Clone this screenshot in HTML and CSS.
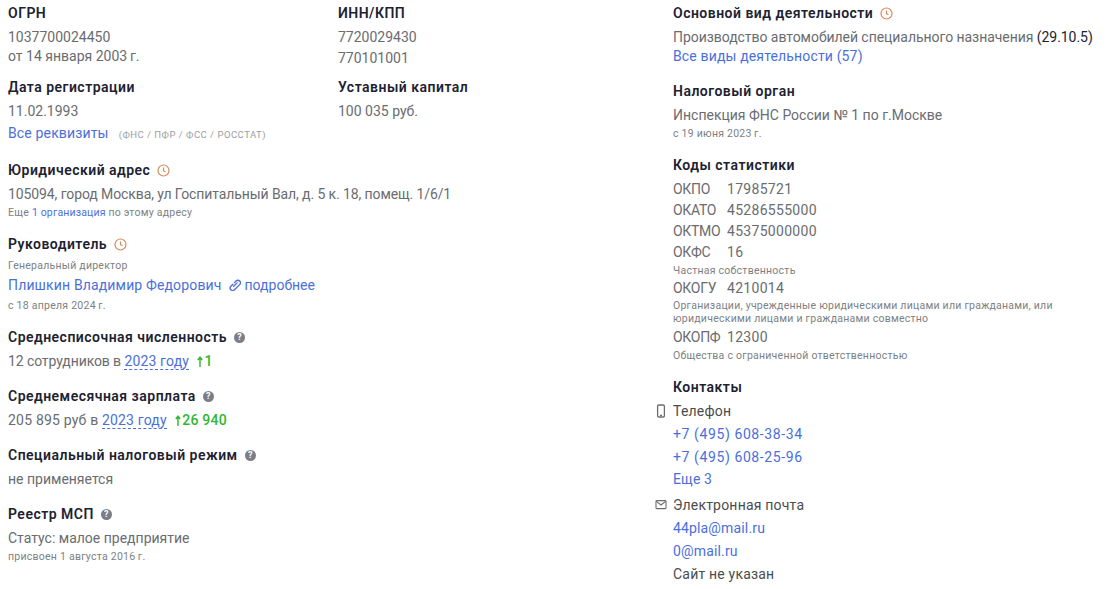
FILE: index.html
```html
<!DOCTYPE html>
<html lang="ru">
<head>
    <meta charset="UTF-8">
    <title>Реквизиты организации</title>
    <link rel="stylesheet" href="styles.css">
</head>
<body>
    <svg class="sprite" width="0" height="0">
        <symbol id="clock" viewBox="0 0 13 13">
            <circle cx="6.5" cy="6.5" r="5.5" fill="none" stroke="currentColor" stroke-width="1.2"/>
            <path d="M6.5 3.4v3.3l2 1.1" fill="none" stroke="currentColor" stroke-width="1.2"/>
        </symbol>
        <symbol id="up" viewBox="0 0 6 11">
            <path d="M3 11V1.5M.8 4L3 1.2 5.2 4" fill="none" stroke="currentColor" stroke-width="1.4"/>
        </symbol>
    </svg>

    <div class="page">
        <div class="col-left">
            <div class="req-grid">
                <div>
                    <div class="title">ОГРН</div>
                    <div class="value">1037700024450</div>
                    <div class="value-tight">от 14 января 2003&#8201;г.</div>
                </div>
                <div>
                    <div class="title">ИНН/КПП</div>
                    <div class="value">7720029430</div>
                    <div class="value next">770101001</div>
                </div>
                <div>
                    <div class="title">Дата регистрации</div>
                    <div class="value">11.02.1993</div>
                </div>
                <div>
                    <div class="title">Уставный капитал</div>
                    <div class="value">100 035 руб.</div>
                </div>
            </div>
            <div class="value next-2"><a href="#">Все реквизиты</a><span class="sources">(ФНС / ПФР / ФСС / РОССТАТ)</span></div>

            <div class="block gap-address">
                <div class="title">Юридический адрес <svg class="ico-clock"><use href="#clock"/></svg></div>
                <div class="value address">105094, город Москва, ул Госпитальный Вал, д. 5 к. 18, помещ. 1/6/1</div>
                <div class="small">Еще <a href="#">1 организация</a> по этому адресу</div>
            </div>

            <div class="block">
                <div class="title">Руководитель <svg class="ico-clock"><use href="#clock"/></svg></div>
                <div class="small role">Генеральный директор</div>
                <div class="value next-2">
                    <a href="#">Плишкин Владимир Федорович</a>
                    <a href="#" class="more">
                        <svg class="ico-link" viewBox="1.5 1.5 9 9"><path d="M5 7l2.6-2.6M4.4 5.4L2.9 6.9a1.9 1.9 0 0 0 2.7 2.7l3.9-3.9a1.9 1.9 0 0 0-2.7-2.7L5.6 4.2" fill="none" stroke="currentColor" stroke-width="1" stroke-linecap="round"/></svg>
                        подробнее
                    </a>
                </div>
                <div class="small since">с 18 апреля 2024&#8201;г.</div>
            </div>

            <div class="block">
                <div class="title">Среднесписочная численность <span class="help">?</span></div>
                <div class="value staff">12 сотрудников в <a href="#" class="dashed">2023 году</a> <span class="up"><svg class="ico-up"><use href="#up"/></svg>1</span></div>
            </div>

            <div class="block wide">
                <div class="title">Среднемесячная зарплата <span class="help">?</span></div>
                <div class="value salary">205 895 руб в <a href="#" class="dashed">2023 году</a> <span class="up"><svg class="ico-up"><use href="#up"/></svg>26 940</span></div>
            </div>

            <div class="block wide">
                <div class="title">Специальный налоговый режим <span class="help">?</span></div>
                <div class="value">не применяется</div>
            </div>

            <div class="block wide">
                <div class="title">Реестр МСП <span class="help">?</span></div>
                <div class="value">Статус: малое предприятие</div>
                <div class="small">присвоен 1 августа 2016&#8201;г.</div>
            </div>
        </div>

        <div class="col-right">
            <div class="title">Основной вид деятельности <svg class="ico-clock"><use href="#clock"/></svg></div>
            <div class="value activity">Производство автомобилей специального назначения <span class="code">(29.10.5)</span></div>
            <div class="value-tight"><a href="#">Все виды деятельности (57)</a></div>

            <div class="block gap-tax">
                <div class="title">Налоговый орган</div>
                <div class="value">Инспекция ФНС России № 1 по г.Москве</div>
                <div class="small">с 19 июня 2023&#8201;г.</div>
            </div>

            <div class="block">
                <div class="title">Коды статистики</div>
                <div class="value stat"><span>ОКПО</span>17985721</div>
                <div class="value stat next"><span>ОКАТО</span>45286555000</div>
                <div class="value stat next"><span>ОКТМО</span>45375000000</div>
                <div class="value stat next"><span>ОКФС</span>16</div>
                <div class="small">Частная собственность</div>
                <div class="value stat"><span>ОКОГУ</span>4210014</div>
                <div class="small long">Организации, учрежденные юридическими лицами или гражданами, или юридическими лицами и гражданами совместно</div>
                <div class="value stat"><span>ОКОПФ</span>12300</div>
                <div class="small">Общества с ограниченной ответственностью</div>
            </div>

            <div class="block">
                <div class="title">Контакты</div>
                <div class="value contact">
                    <svg class="ico-side" viewBox="0 0 12 14"><rect x="2.6" y="1" width="6.8" height="12" rx="1.2" fill="none" stroke="currentColor" stroke-width="1.3"/><path d="M5 11.4h2" stroke="currentColor" stroke-width="1.1"/></svg>
                    Телефон
                </div>
                <div class="value next-3 phone"><a href="#">+7 (495) 608-38-34</a></div>
                <div class="value next-3 phone"><a href="#">+7 (495) 608-25-96</a></div>
                <div class="value next-2"><a href="#">Еще 3</a></div>
                <div class="value contact next-6">
                    <svg class="ico-side" viewBox="0 0 12 14"><rect x="1" y="2.6" width="10" height="8" rx="0.8" fill="none" stroke="currentColor" stroke-width="1.1"/><path d="M1.4 3.4L6 7l4.6-3.6" fill="none" stroke="currentColor" stroke-width="1.1"/></svg>
                    Электронная почта
                </div>
                <div class="value next-3"><a href="#">44pla@mail.ru</a></div>
                <div class="value next-3"><a href="#">0@mail.ru</a></div>
                <div class="value contact next-3">Сайт не указан</div>
            </div>
        </div>
    </div>
</body>
</html>
```

FILE: styles.css
```css
body {
    margin: 0;
    background: #ffffff;
    font-family: "Roboto", "Liberation Sans", sans-serif;
    font-size: 14px;
    color: #696c70;
}

a {
    color: #4a6fdc;
    letter-spacing: 0.15px;
    text-decoration: none;
}

.sprite {
    position: absolute;
}

.page {
    display: grid;
    grid-template-columns: 665px 1fr;
    padding: 3px 8px 0;
}

.req-grid {
    display: grid;
    grid-template-columns: 330px 1fr;
    row-gap: 9px;
}

.title {
    display: flex;
    align-items: center;
    gap: 7px;
    height: 20px;
    margin-bottom: 4px;
    font-size: 14px;
    font-weight: 600;
    letter-spacing: 0.48px;
    color: #1d2230;
}

.value {
    line-height: 20px;
    white-space: nowrap;
}

.value-tight {
    line-height: 18px;
}

.next {
    margin-top: 1px;
}

.next-2 {
    margin-top: 2px;
}

.next-3 {
    margin-top: 3px;
}

.next-6 {
    margin-top: 6px;
}

.address {
    letter-spacing: -0.1px;
}

.activity {
    letter-spacing: -0.05px;
}

.staff {
    letter-spacing: -0.1px;
}

.salary {
    letter-spacing: 0.2px;
}

.phone a {
    letter-spacing: 0.6px;
}

/* the line box is 2px taller than its slot, it only moves the text down */
.small {
    font-size: 10.5px;
    line-height: 18px;
    margin-bottom: -2px;
    letter-spacing: 0.25px;
    color: #7c7f83;
}

.small.role {
    margin-top: -1px;
}

.small.since {
    margin-top: 3px;
    margin-bottom: 0;
    line-height: 15px;
}

.small.long {
    line-height: 13px;
    margin-top: 1px;
    margin-bottom: 2px;
    width: 400px;
}

.sources {
    margin-left: 10px;
    font-size: 9.5px;
    letter-spacing: 0.5px;
    color: #9a9da1;
}

.block {
    margin-top: 14px;
}

.block.wide {
    margin-top: 15px;
}

.gap-address {
    margin-top: 15px;
}

.gap-tax {
    margin-top: 16px;
}

.more {
    margin-left: 4px;
    letter-spacing: 0;
}

.ico-clock {
    width: 13px;
    height: 13px;
    color: #d48b5c;
}

.ico-link {
    width: 12px;
    height: 12px;
    vertical-align: -1px;
}

.ico-up {
    width: 6px;
    height: 11px;
    margin-right: 1px;
    vertical-align: -1px;
}

.help {
    display: inline-flex;
    align-items: center;
    justify-content: center;
    width: 11px;
    height: 11px;
    border-radius: 50%;
    background: #7b7d87;
    color: #ffffff;
    font-size: 9px;
    font-weight: 700;
    letter-spacing: 0;
}

.dashed {
    border-bottom: 1px dashed #4a6fdc;
    margin-right: 5px;
}

.up {
    color: #2fb62f;
    font-weight: 500;
    letter-spacing: 0.2px;
}

.code {
    color: #1d2230;
}

.stat {
    letter-spacing: 0.3px;
}

.stat span {
    display: inline-block;
    width: 54px;
    letter-spacing: -0.3px;
}

.col-right .contact {
    color: #4a4c4e;
    letter-spacing: 0.2px;
}

.contact {
    position: relative;
}

.ico-side {
    position: absolute;
    left: -18px;
    top: 3px;
    width: 12px;
    height: 14px;
    color: #6a6c70;
}
```
